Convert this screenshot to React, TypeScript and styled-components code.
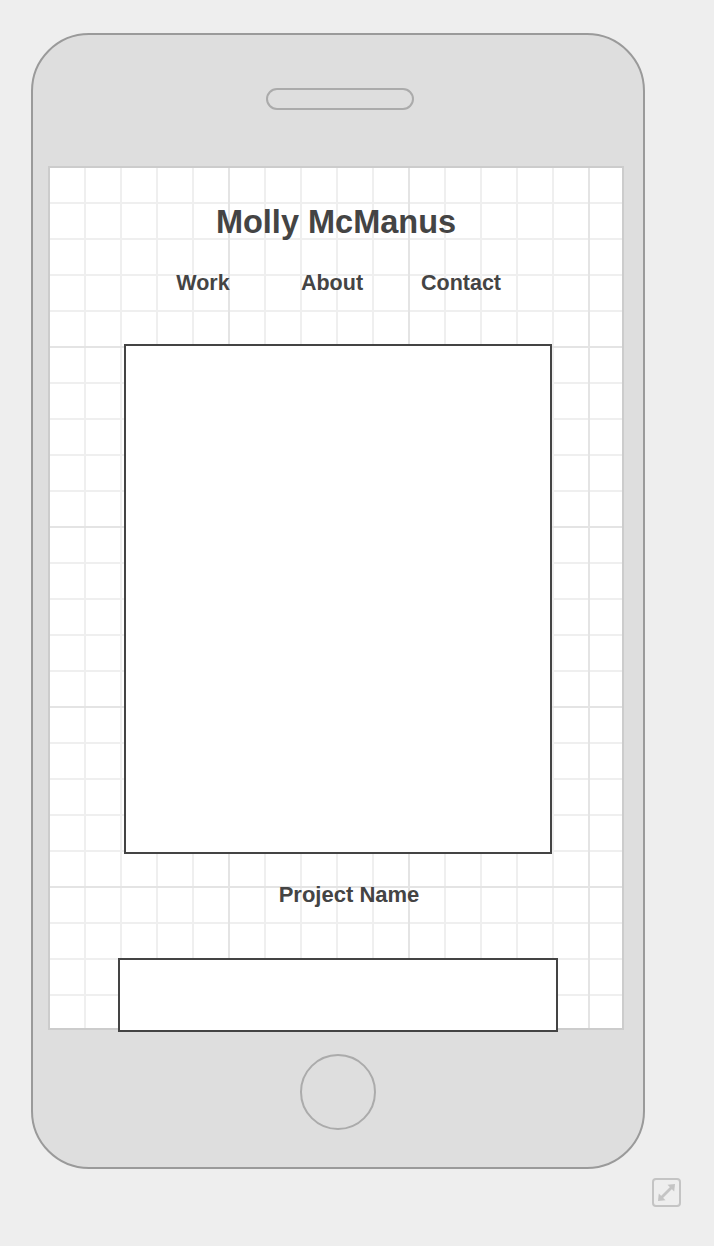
import { FC } from "react";
import styled, { createGlobalStyle } from "styled-components";

const GlobalStyle = createGlobalStyle`
  html, body {
    margin: 0;
    padding: 0;
    background: #eeeeee;
  }
  * {
    box-sizing: border-box;
  }
`;

const navItems = ["Work", "About", "Contact"];

const ExpandIcon: FC = () => (
  <svg width="30" height="30" viewBox="0 0 30 30" fill="none">
    <rect x="1" y="1" width="27" height="27" rx="3" stroke="#c4c4c4" strokeWidth="2" />
    <line x1="9" y1="20" x2="20" y2="9" stroke="#c4c4c4" strokeWidth="2.8" />
    <polygon points="23,6 15.5,6.8 22.2,13.5" fill="#c4c4c4" />
    <polygon points="6,23 6.8,15.5 13.5,22.2" fill="#c4c4c4" />
  </svg>
);

const App: FC = () => {
  return (
    <Page>
      <GlobalStyle />
      <Phone>
        <Speaker />
        <Screen>
          <Title>Molly McManus</Title>
          <Nav>
            {navItems.map((item) => (
              <NavItem key={item}>{item}</NavItem>
            ))}
          </Nav>
          <ImageBox />
          <ProjectName>Project Name</ProjectName>
          <FooterBox />
        </Screen>
        <HomeButton />
      </Phone>
      <IconRow>
        <ExpandIcon />
      </IconRow>
    </Page>
  );
};

export default App;

const Page = styled.div`
  width: 714px;
  min-height: 1246px;
  padding: 33px 0 0 31px;
  font-family: "Liberation Sans", Arial, Helvetica, sans-serif;
  color: #444;
`;

const Phone = styled.div`
  width: 614px;
  height: 1136px;
  border: 2px solid #9a9a9a;
  border-radius: 58px;
  background: #dedede;
  display: flex;
  flex-direction: column;
  align-items: center;
  padding-top: 53px;
`;

const Speaker = styled.div`
  width: 148px;
  height: 22px;
  border: 2px solid #ababab;
  border-radius: 11px;
  margin-left: 4px;
`;

const Screen = styled.div`
  width: 576px;
  height: 864px;
  margin: 56px 4px 0 0;
  border: 2px solid #cccccc;
  background-color: #ffffff;
  background-image: linear-gradient(to right, transparent 178px, #e4e4e4 178px, #e4e4e4 180px),
    linear-gradient(to bottom, transparent 178px, #e4e4e4 178px, #e4e4e4 180px),
    linear-gradient(to right, transparent 34px, #efefef 34px, #efefef 36px),
    linear-gradient(to bottom, transparent 34px, #efefef 34px, #efefef 36px);
  background-size: 180px 180px, 180px 180px, 36px 36px, 36px 36px;
  display: flex;
  flex-direction: column;
  align-items: center;
`;

const Title = styled.h1`
  margin: 36px 0 0;
  font-size: 32.5px;
  line-height: 36px;
  font-weight: 700;
  color: #444;
`;

const Nav = styled.nav`
  display: flex;
  margin: 31px 8px 0 0;
`;

const NavItem = styled.span`
  width: 129px;
  text-align: center;
  font-size: 21.5px;
  line-height: 25px;
  font-weight: 700;
  color: #444;
`;

const ImageBox = styled.div`
  width: 428px;
  height: 510px;
  margin: 48px 0 0 4px;
  border: 2px solid #444;
  background: #ffffff;
  flex-shrink: 0;
`;

const ProjectName = styled.h2`
  margin: 28px 0 0 26px;
  font-size: 22px;
  line-height: 25px;
  font-weight: 700;
  color: #444;
`;

const FooterBox = styled.div`
  width: 440px;
  height: 74px;
  margin: 51px 0 0 4px;
  border: 2px solid #444;
  background: #ffffff;
  flex-shrink: 0;
`;

const HomeButton = styled.div`
  width: 76px;
  height: 76px;
  margin-top: 24px;
  border: 2px solid #ababab;
  border-radius: 50%;
`;

const IconRow = styled.div`
  width: 651px;
  display: flex;
  justify-content: flex-end;
  margin-top: 9px;
`;
